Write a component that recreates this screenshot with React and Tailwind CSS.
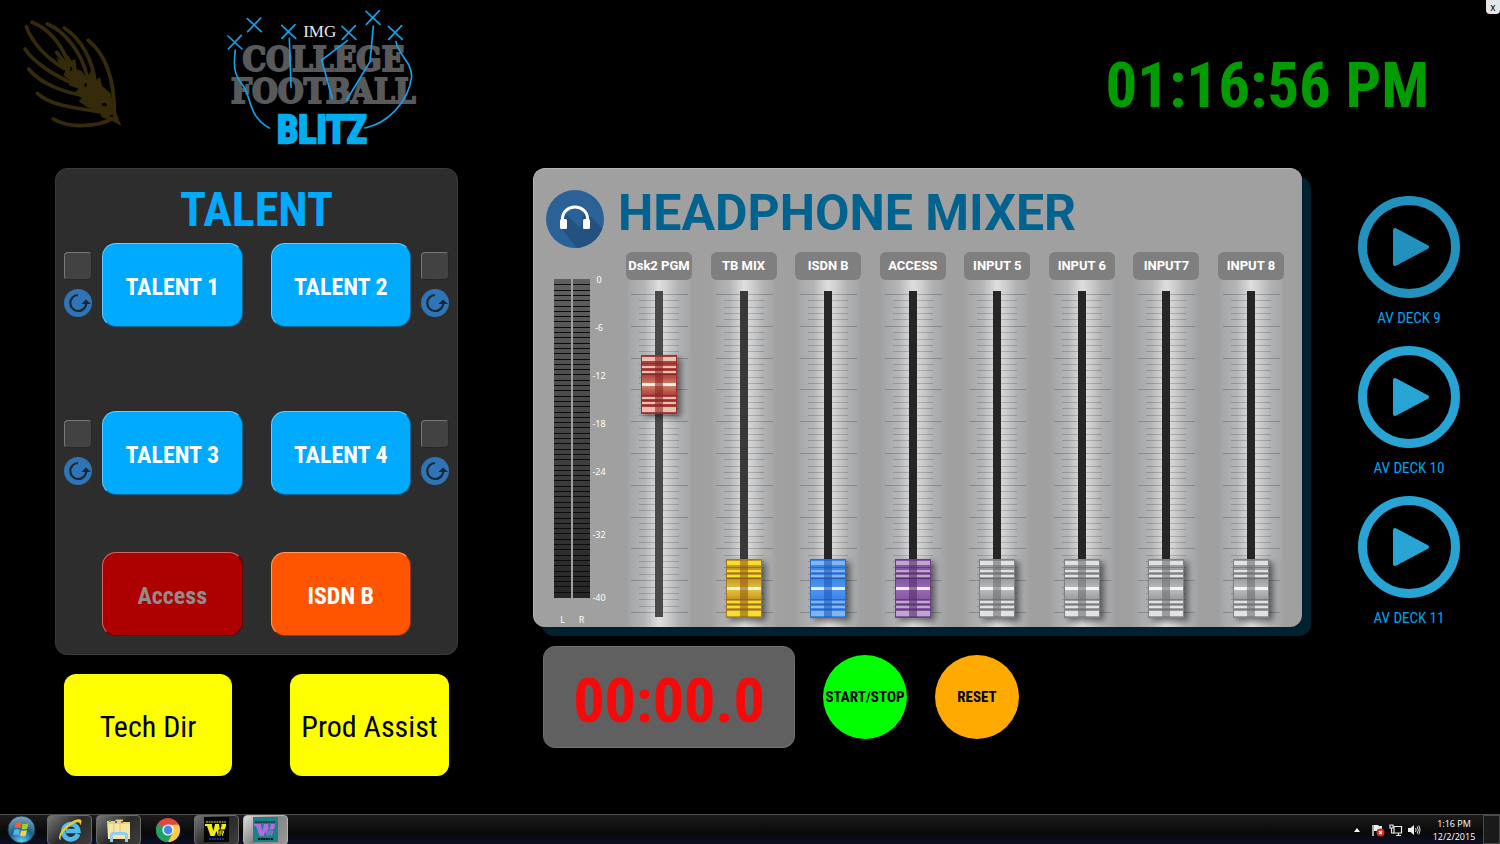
import React, { useEffect, useState } from 'react';

const GRAY_CAP = { base: '#9b9da0', dark: '#6c6e70', light: '#e2e2e2', glow: '#bcbdbf' };

const CHANNELS = [
  { id: 'dsk2', label: 'Dsk2 PGM', level: 75, slot: '#4a4a4a', cap: { base: '#b0403c', dark: '#8a2623', light: '#e4c3b0', glow: '#d08468' } },
  { id: 'tb', label: 'TB MIX', level: 0, slot: '#393939', cap: { base: '#c9962a', dark: '#8f5f14', light: '#f0e12c', glow: '#e8c637' } },
  { id: 'isdn', label: 'ISDN B', level: 0, slot: '#262626', cap: { base: '#3f86ea', dark: '#1e5cb8', light: '#84b6ee', glow: '#4d95f5' } },
  { id: 'access', label: 'ACCESS', level: 0, slot: '#262626', cap: { base: '#8558a0', dark: '#54306e', light: '#bfa6cf', glow: '#9a6bb4' } },
  { id: 'in5', label: 'INPUT 5', level: 0, slot: '#262626', cap: GRAY_CAP },
  { id: 'in6', label: 'INPUT 6', level: 0, slot: '#262626', cap: GRAY_CAP },
  { id: 'in7', label: 'INPUT7', level: 0, slot: '#262626', cap: GRAY_CAP },
  { id: 'in8', label: 'INPUT 8', level: 0, slot: '#262626', cap: GRAY_CAP }
];

const SCALE = [
  { db: '0', size: 'h-12' },
  { db: '-6', size: 'h-12' },
  { db: '-12', size: 'h-12' },
  { db: '-18', size: 'h-12' },
  { db: '-24', size: 'h-[63px]' },
  { db: '-32', size: 'h-[63px]' },
  { db: '-40', size: 'h-3' }
];

const DECKS = [
  { name: 'AV DECK 9', color: 'text-[#2391be]' },
  { name: 'AV DECK 10', color: 'text-[#27a4d4]' },
  { name: 'AV DECK 11', color: 'text-[#27a4d4]' }
];

const NARROW = "font-['Roboto_Condensed','Liberation_Sans_Narrow','Liberation_Sans',sans-serif]";

function WheatLogo() {
  return (
    <svg viewBox="66 57 300 336" className="mt-[19px] h-28 w-[100px] shrink-0" role="img" aria-label="Wheat ear">
      <g fill="none" stroke="#352b0b" strokeWidth="11" strokeLinecap="round">
        <path d="M79 80 C96 128 140 175 192 205" />
        <path d="M96 67 C145 85 185 132 208 195" />
        <path d="M142 72 C192 92 244 155 262 230" />
        <path d="M193 84 C245 118 278 180 286 250" />
        <path d="M264 121 C316 160 344 240 343 340" />
        <path d="M75 147 C100 185 160 228 232 255" />
        <path d="M86 207 C120 250 190 278 260 288" />
        <path d="M112 280 C155 320 240 326 322 338" />
        <path d="M160 357 C205 384 290 384 345 352" />
        <path d="M170 157 L200 195" />
      </g>
      <path
        d="M168 172 L198 190 L204 164 L214 182 L226 178 L230 208 L246 214 L262 238 L272 212 L284 244 L300 232 L306 258 L332 280 L342 322 L364 377 L338 364 L306 352 L296 334 L262 322 L236 304 L246 294 L222 280 L236 266 L206 256 L214 244 L190 226 L196 212 L180 198 Z"
        fill="#352b0b"
      />
      <g fill="#000">
        <ellipse cx="213" cy="207" rx="3" ry="7" />
        <ellipse cx="257" cy="255" rx="4" ry="6" />
        <ellipse cx="313" cy="314" rx="8" ry="5" />
        <ellipse cx="335" cy="348" rx="5" ry="3" />
      </g>
    </svg>
  );
}

function BlitzLogo() {
  const marks = [[705, 127], [763, 75], [866, 95], [1047, 98], [1119, 53], [1186, 98]];
  return (
    <svg viewBox="675 24 585 450" className="mt-2 ml-[103px] h-[150px] w-[195px] shrink-0" role="img" aria-label="IMG College Football Blitz">
      <g fill="#58595b" fontFamily="'DejaVu Serif Condensed','DejaVu Serif',serif" fontWeight="700" stroke="#58595b" strokeWidth="6">
        <text x="970" y="213" fontSize="99" textAnchor="middle">COLLEGE</text>
        <text x="970" y="310" fontSize="99" textAnchor="middle">FOOTBALL</text>
      </g>
      <text x="959" y="111" fontSize="51" textAnchor="middle" fill="#e8e8e8" fontFamily="'Liberation Serif',serif">IMG</text>
      <g fill="none" stroke="#12a2ea" strokeWidth="5" strokeLinecap="round">
        {marks.map(([x, y]) => (
          <path key={x} d={`M${x - 21} ${y - 19} L${x + 21} ${y + 20} M${x + 19} ${y - 21} L${x - 20} ${y + 20}`} />
        ))}
        <path d="M706 150 C700 200 702 225 730 258 C755 295 745 350 808 384" />
        <path d="M868 115 L873 262" />
        <path d="M1042 122 L965 180 L997 296" />
        <path d="M1120 78 L1110 185 L1040 300" />
        <path d="M1188 125 C1195 165 1235 185 1235 230 C1225 310 1160 370 1095 384" />
      </g>
      <text
        x="966"
        y="430"
        fontSize="114"
        textAnchor="middle"
        fill="#00aeef"
        stroke="#00aeef"
        strokeWidth="7"
        fontWeight="700"
        fontFamily="'Roboto Condensed','Liberation Sans Narrow','Liberation Sans',sans-serif"
      >
        BLITZ
      </text>
    </svg>
  );
}

function ResetIcon() {
  return (
    <svg viewBox="0 0 28 28" className="size-7">
      <circle cx="14" cy="14" r="14" fill="#2f74b5" />
      <path d="M14 6 A8 8 0 1 0 22.300 14" fill="none" stroke="#1c2733" strokeWidth="2.200" />
      <path d="M17.500 15 L22 10.400 L27 15 Z" fill="#1c2733" />
    </svg>
  );
}

function TalentSide({ name }) {
  return (
    <div className="flex w-7 shrink-0 flex-col gap-[9px] pt-[9px]">
      <input
        type="checkbox"
        aria-label={`${name} select`}
        className="size-7 appearance-none rounded-sm border border-t-[#777] border-r-[#262626] border-b-[#262626] border-l-[#777] bg-[#424242] checked:bg-[#00aaff]"
      />
      <button type="button" aria-label={`${name} reset`} className="size-7 rounded-full">
        <ResetIcon />
      </button>
    </div>
  );
}

function PadButton({ children, className }) {
  return (
    <button
      type="button"
      className={`h-[84px] flex-1 rounded-[14px] border border-t-white/40 border-r-black/40 border-b-black/40 border-l-white/40 pt-1 text-2xl font-bold ${className}`}
    >
      {children}
    </button>
  );
}

function TalentRow({ left, right }) {
  return (
    <div className="flex gap-[10px]">
      <TalentSide name={left} />
      <div className="flex flex-1 gap-7">
        <PadButton className="bg-[#00aaff] text-white">{left}</PadButton>
        <PadButton className="bg-[#00aaff] text-white">{right}</PadButton>
      </div>
      <TalentSide name={right} />
    </div>
  );
}

function HeadphoneIcon() {
  return (
    <svg viewBox="0 0 58 58" className="size-[58px] shrink-0">
      <defs>
        <clipPath id="badge">
          <circle cx="29" cy="29" r="29" />
        </clipPath>
      </defs>
      <circle cx="29" cy="29" r="29" fill="#2a6298" />
      <path d="M39 21 L62 44 L50 62 L34 62 L15 38 L20 24 L34 38 Z" fill="#235280" clipPath="url(#badge)" />
      <path d="M16.500 31 V28.500 A12.500 11.500 0 0 1 41.500 28.500 V31" fill="none" stroke="#fff" strokeWidth="3" />
      <rect x="14" y="29" width="7" height="10" rx="1.500" fill="#fff" />
      <rect x="37" y="29" width="7" height="10" rx="1.500" fill="#fff" />
    </svg>
  );
}

function Meter() {
  return (
    <div className="mt-[27px] flex shrink-0 gap-0.5">
      {['L', 'R'].map(side => (
        <div key={side} className="flex w-[17px] flex-col items-center gap-4">
          <svg viewBox="0 0 17 319" className="h-[319px] w-full">
            <defs>
              <linearGradient id={`meter${side}`} x1="0" y1="0" x2="0" y2="1">
                <stop offset="0" stopColor="#606060" />
                <stop offset="1" stopColor="#262626" />
              </linearGradient>
            </defs>
            <rect width="17" height="319" fill={`url(#meter${side})`} />
            {Array.from({ length: 59 }, (_, i) => (
              <rect key={i} x="0" y={Math.round((i + 1) * 5.3)} width="17" height="1" fill="#0c0c0c" />
            ))}
          </svg>
          <span className="text-[9px] leading-3 text-white">{side}</span>
        </div>
      ))}
    </div>
  );
}

// 66x347 strip: tick marks, slot and the fader cap at its current level
function FaderDrawing({ id, level, slot, cap }) {
  const top = 279 - Math.round((level / 100) * 272);
  return (
    <svg viewBox="0 0 66 347" className="h-full w-full">
      <defs>
        <linearGradient id={`${id}-body`} x1="0" y1="0" x2="0" y2="1">
          <stop offset="0" stopColor={cap.base} />
          <stop offset="0.5" stopColor={cap.glow} />
          <stop offset="1" stopColor={cap.base} />
        </linearGradient>
        <filter id={`${id}-shade`} x="-40%" y="-20%" width="190%" height="150%">
          <feDropShadow dx="4" dy="3" stdDeviation="3" floodColor="#000" floodOpacity="0.5" />
        </filter>
      </defs>
      {Array.from({ length: 51 }, (_, i) => {
        const major = i % 5 === 0;
        return (
          <rect
            key={i}
            x={major ? 5 : 13}
            y={14 + Math.round(i * 6.36)}
            width={major ? 57 : 40}
            height="1"
            fill="#000"
            opacity={major ? 0.2 : 0.17}
          />
        );
      })}
      <rect x="29" y="11" width="8" height="326" fill={slot} />
      <g transform={`translate(15 ${top})`}>
        <rect width="36" height="59" fill={cap.base} filter={`url(#${id}-shade)`} />
        <rect x="0.500" y="0.500" width="35" height="58" fill="none" stroke={cap.dark} opacity="0.6" />
        <rect x="1" y="2" width="34" height="4" fill={cap.light} />
        <rect x="1" y="8" width="34" height="1" fill={cap.dark} opacity="0.7" />
        <rect x="1" y="11" width="34" height="2" fill={cap.light} />
        <rect x="1" y="14" width="34" height="1" fill={cap.dark} opacity="0.7" />
        <rect x="1" y="16" width="34" height="2" fill={cap.light} />
        <rect x="1" y="19" width="34" height="1" fill={cap.dark} />
        <rect x="1" y="20" width="34" height="20" fill={`url(#${id}-body)`} />
        <rect x="1" y="28" width="34" height="3" fill="#fff" opacity="0.85" />
        <rect x="1" y="40" width="34" height="1" fill={cap.dark} opacity="0.7" />
        <rect x="1" y="42" width="34" height="2" fill={cap.light} />
        <rect x="1" y="45" width="34" height="1" fill={cap.dark} opacity="0.7" />
        <rect x="1" y="47" width="34" height="2" fill={cap.light} />
        <rect x="1" y="50" width="34" height="1" fill={cap.dark} opacity="0.7" />
        <rect x="1" y="52" width="34" height="5" fill={cap.light} />
        <rect x="14" y="1" width="8" height="57" fill={cap.dark} opacity="0.6" />
      </g>
    </svg>
  );
}

function Channel({ channel }) {
  const [level, setLevel] = useState(channel.level);
  return (
    <div className="flex w-[66px] flex-col">
      <label
        htmlFor={channel.id}
        className="flex h-7 items-center justify-center rounded-md bg-[#7f7f7f] font-[Roboto,sans-serif] text-[13px] font-bold whitespace-nowrap text-white"
      >
        {channel.label}
      </label>
      <div className="relative h-[347px] bg-[linear-gradient(90deg,#a0a0a0,#a8a9ab_10%,#b4b5b7_28%,#dedede_50%,#cfcfcf_62%,#b0b1b3_80%,#a8a9ab_92%,#a0a0a0)]">
        <FaderDrawing id={`fader-${channel.id}`} level={level} slot={channel.slot} cap={channel.cap} />
        <input
          id={channel.id}
          type="range"
          min="0"
          max="100"
          value={level}
          onChange={e => setLevel(Number(e.target.value))}
          className="absolute inset-0 h-full w-full cursor-pointer opacity-0 [direction:rtl] [writing-mode:vertical-lr]"
        />
      </div>
    </div>
  );
}

function Mixer() {
  return (
    <section className="rounded-xl border-t border-l border-[#b4b4b4] bg-[#a0a0a0] shadow-[9px_9px_0_#00212f]">
      <div className="flex items-start gap-[14px] pt-[21px] pl-3">
        <HeadphoneIcon />
        <h2 className="font-[Roboto,sans-serif] text-[50px] leading-[46px] font-bold whitespace-nowrap text-[#00638f]">
          HEADPHONE MIXER
        </h2>
      </div>
      <div className="mt-1 flex pr-[18px] pl-5 font-['Noto_Sans',sans-serif]">
        <Meter />
        <div className="mt-[22px] w-[18px] text-center text-[9px] leading-3 text-white">
          {SCALE.map(s => (
            <div key={s.db} className={s.size}>{s.db}</div>
          ))}
        </div>
        <div className="ml-[18px] flex flex-1 justify-between">
          {CHANNELS.map(c => (
            <Channel key={c.id} channel={c} />
          ))}
        </div>
      </div>
    </section>
  );
}

function StopWatch() {
  const [tenths, setTenths] = useState(0);
  const [running, setRunning] = useState(false);

  useEffect(() => {
    if (!running) return;
    const timer = setInterval(() => setTenths(t => t + 1), 100);
    return () => clearInterval(timer);
  }, [running]);

  const pad = n => String(n).padStart(2, '0');
  const text = `${pad(Math.floor(tenths / 600))}:${pad(Math.floor(tenths / 10) % 60)}.${tenths % 10}`;

  return (
    <div className="mt-[19px] ml-[10px] flex items-center gap-7">
      <div className="flex h-[102px] w-[252px] items-center justify-center rounded-xl border border-[#707070] bg-[#606060] pt-2 text-[62px] leading-[72px] font-bold text-[#f80808]">
        {text}
      </div>
      <button
        type="button"
        onClick={() => setRunning(!running)}
        className="size-[84px] rounded-full bg-[#00ff00] text-[15px] font-bold text-black"
      >
        START/STOP
      </button>
      <button
        type="button"
        onClick={() => { setRunning(false); setTenths(0); }}
        className="size-[84px] rounded-full bg-[#ffaa00] text-[15px] font-bold text-black"
      >
        RESET
      </button>
    </div>
  );
}

function Deck({ deck }) {
  return (
    <button type="button" className="flex flex-col items-center gap-2 text-[15px] leading-6 text-[#00a2f2]">
      <svg viewBox="0 0 102 102" className={`size-[102px] ${deck.color}`}>
        <circle cx="51" cy="51" r="46.500" fill="none" stroke="currentColor" strokeWidth="9" />
        <path d="M37 34 L69 51 L37 68 Z" fill="currentColor" stroke="currentColor" strokeWidth="4" strokeLinejoin="round" />
      </svg>
      {deck.name}
    </button>
  );
}

function TaskButton({ label, className, children }) {
  return (
    <button type="button" aria-label={label} className={`flex h-[30px] w-[45px] items-center justify-center ${className}`}>
      {children}
    </button>
  );
}

function WIcon({ bg, fg, base, foot }) {
  return (
    <svg viewBox="0 0 25 25" className="size-[25px]">
      <rect width="25" height="25" fill={bg} />
      <path d="M2 5 H22" stroke={base} strokeWidth="2" strokeDasharray="2 0.600" />
      <path d="M1 7 H8 V9 L9.500 14 L11 7 H15 L16 14 L17.500 9 V7 H22 V9 L18.500 19 H14 L12.500 14 L10.500 19 H6.500 L3 9 H1 Z" fill={fg} />
      <path d="M14.500 12.500 H21 V16.500 H18 V20 H14.500 Z" fill={bg} />
      <path d="M16 19 V14 H19.500 V16 H16" fill="none" stroke={fg} />
      <path d="M5 22 H20" stroke={foot} strokeWidth="2" strokeDasharray="2 0.600" />
    </svg>
  );
}

const OPEN_TASK = 'rounded-sm border border-[#6a6a6a] bg-[linear-gradient(135deg,#777,#2a2a2a_50%,#3d3d3d)]';

function Taskbar() {
  return (
    <footer className="mt-auto flex h-[30px] items-center border-t border-[#4d4d4d] bg-[linear-gradient(#1c1c1c,#090909_60%,#0c1024)] pl-[7px] font-['Open_Sans',sans-serif] text-white">
      <button type="button" aria-label="Start" className="mr-[11px] shrink-0">
        <svg viewBox="0 0 30 30" className="size-[29px]">
          <defs>
            <radialGradient id="orb" cx="0.5" cy="0.95" r="0.95">
              <stop offset="0" stopColor="#5fd0f4" />
              <stop offset="0.5" stopColor="#17608f" />
              <stop offset="1" stopColor="#8ca9bd" />
            </radialGradient>
          </defs>
          <circle cx="15" cy="15" r="14" fill="url(#orb)" stroke="#16364c" />
          <path d="M9 8.500 Q12 6.500 15 8.200 L13.800 14 Q11 12.500 7.800 14 Z" fill="#f0622a" />
          <path d="M16 8.700 Q19 10.200 22.200 8.600 L21 14.300 Q18 15.800 14.900 14.400 Z" fill="#9bcf3a" />
          <path d="M7.500 15.200 Q10.500 13.800 13.500 15.200 L12.300 21 Q9.500 19.500 6.300 21 Z" fill="#56b3ec" />
          <path d="M14.600 15.700 Q17.500 17 20.700 15.500 L19.500 21.200 Q16.500 22.900 13.400 21.300 Z" fill="#fbd03b" />
        </svg>
      </button>
      <div className="flex gap-1">
        <TaskButton label="Internet Explorer" className={OPEN_TASK}>
          <svg viewBox="0 0 26 24" className="h-6 w-[26px]">
            <path d="M21 16 A7.600 7.600 0 1 1 21.300 13 H9" fill="none" stroke="#4cbcee" strokeWidth="4.600" />
            <path d="M4 22 C-1 21 4 11 12 5.500 C18 1 24 0 24.500 3 C24.600 4.500 24 6 23 7.500 C23.500 3 19 3.500 13.500 7.500 C7 12 2 19 4 22 Z" fill="#f5c62c" />
          </svg>
        </TaskButton>
        <TaskButton label="Windows Explorer" className={OPEN_TASK}>
          <svg viewBox="0 0 26 24" className="h-6 w-[26px]">
            <path d="M1 3 H9 L10 1.500 H17 V4 H24 V21 H2 Z" fill="#e8cf7a" />
            <rect x="3" y="2" width="2" height="2" fill="#3ca83c" />
            <rect x="9" y="3" width="2" height="2" fill="#3772c8" />
            <rect x="15" y="3" width="2" height="2" fill="#d04b3a" />
            <path d="M2 6 H24 V21 H2 Z" fill="#f5e6a4" />
            <path d="M8 6 V15 M14 6 V15" stroke="#dcc577" />
            <path d="M5.500 24 V17 Q5.500 15.500 8 15.500 H18 Q20.500 15.500 20.500 17 V24" fill="none" stroke="#93cdf0" strokeWidth="3" />
          </svg>
        </TaskButton>
        <TaskButton label="Chrome">
          <svg viewBox="0 0 24 24" className="size-6">
            <circle cx="12" cy="12" r="12" fill="#dd4b3e" />
            <path d="M1.600 6 A12 12 0 0 0 12 24 L17 15 L12 12 Z" fill="#1da462" />
            <path d="M12 24 A12 12 0 0 0 22.800 6.800 H12 L17 14.500 Z" fill="#ffcd41" />
            <circle cx="12" cy="12" r="5.600" fill="#fff" />
            <circle cx="12" cy="12" r="4.400" fill="#4688f1" />
          </svg>
        </TaskButton>
        <TaskButton label="WheatNet" className={OPEN_TASK}>
          <WIcon bg="#060606" fg="#f2ec12" base="#77740f" foot="#1a2a96" />
        </TaskButton>
        <TaskButton label="Screen Builder" className="rounded-sm border border-[#b5b5b5] bg-[linear-gradient(135deg,#ddd,#858585_50%,#999)]">
          <WIcon bg="#178287" fg="#b56ae0" base="#243a40" foot="#080808" />
        </TaskButton>
      </div>
      <div className="ml-auto flex h-full items-center gap-1">
        <svg viewBox="0 0 8 6" className="mr-1.5 h-1.5 w-2">
          <path d="M4 1 L7 5 H1 Z" fill="#fff" />
        </svg>
        <svg viewBox="0 0 14 14" className="size-3.5">
          <path d="M2 2 V13" stroke="#ddd" strokeWidth="1.500" />
          <path d="M3 2 H7 L8 3 H11 V8 H3 Z" fill="#eee" />
          <circle cx="9.500" cy="9.500" r="4" fill="#d5281e" />
          <path d="M8 8 L11 11 M11 8 L8 11" stroke="#fff" strokeWidth="1.200" />
        </svg>
        <svg viewBox="0 0 14 14" className="size-3.5" fill="none" stroke="#e8e8e8" strokeWidth="1.200">
          <path d="M5 3.500 H12.500 V10 H5 Z M7 12.500 H12 M9.500 10 V12" />
          <path d="M1 2 H4 V5 H1 Z M2.500 5 V10 H5" />
        </svg>
        <svg viewBox="0 0 14 14" className="size-3.5">
          <path d="M1 5 H3.500 L7 2 V12 L3.500 9 H1 Z" fill="#eee" />
          <path d="M8.500 5 Q9.800 7 8.500 9 M10.200 3.500 Q12.400 7 10.200 10.500 M11.800 2.500 Q14.500 7 11.800 11.500" fill="none" stroke="#ddd" />
        </svg>
        <div className="ml-1 w-[50px] text-center text-[9px] leading-[13px] whitespace-nowrap">
          <div>1:16 PM</div>
          <div>12/2/2015</div>
        </div>
        <button type="button" aria-label="Show desktop" className="h-full w-[17px] border border-[#4a4a4a] bg-[#1a1a1a]" />
      </div>
    </footer>
  );
}

export default function App() {
  return (
    <div className={`relative flex min-h-screen flex-col bg-black ${NARROW}`}>
      <button
        type="button"
        aria-label="Close"
        className="absolute top-0 right-0 flex size-3.5 items-center justify-center rounded-b-sm bg-[#e6e6e6] font-['Noto_Sans',sans-serif] text-[10px] text-black"
      >
        x
      </button>

      <header className="flex h-[168px] pl-[22px]">
        <WheatLogo />
        <BlitzLogo />
        <time className="mt-11 mr-[71px] ml-auto text-[63px] leading-[84px] font-bold whitespace-nowrap text-[#009c00]">
          01:16:56 PM
        </time>
      </header>

      <main className="flex pr-10 pl-[55px]">
        <div className="w-[403px] shrink-0">
          <section className="rounded-xl border border-[#3a3a3a] bg-[#2d2d2d] px-2 pt-2 pb-[18px]">
            <h1 className="text-center text-5xl leading-[66px] font-bold text-[#00aaff]">TALENT</h1>
            <TalentRow left="TALENT 1" right="TALENT 2" />
            <div className="mt-[84px]">
              <TalentRow left="TALENT 3" right="TALENT 4" />
            </div>
            <div className="mt-[57px] flex gap-7 px-[38px]">
              <PadButton className="bg-[#ad0000] text-[#938a8a]">Access</PadButton>
              <PadButton className="bg-[#ff5500] text-white">ISDN B</PadButton>
            </div>
          </section>
          <div className="mt-[19px] flex justify-between px-[9px] text-3xl text-black">
            <button type="button" className="h-[102px] w-[168px] rounded-xl bg-[#ffff00] pt-1">Tech Dir</button>
            <button type="button" className="h-[102px] w-[159px] rounded-xl bg-[#ffff00] pt-1">Prod Assist</button>
          </div>
        </div>

        <div className="ml-[75px] flex-1">
          <Mixer />
          <StopWatch />
        </div>

        <div className="ml-14 flex w-[102px] shrink-0 flex-col items-center gap-4 pt-7">
          {DECKS.map(d => (
            <Deck key={d.name} deck={d} />
          ))}
        </div>
      </main>

      <Taskbar />
    </div>
  );
}
